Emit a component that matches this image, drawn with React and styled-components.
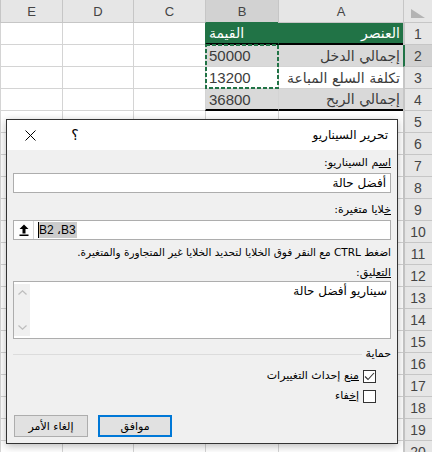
import React from 'react';
import styled, { createGlobalStyle } from 'styled-components';

const GlobalStyle = createGlobalStyle`
  html, body {
    margin: 0;
    padding: 0;
    background: #fff;
    overflow: hidden;
  }
`;

const Screen = styled.div`
  position: relative;
  width: 432px;
  height: 452px;
  overflow: hidden;
  font-family: "Liberation Sans", "DejaVu Sans", sans-serif;
`;

// sheet grid, right-to-left: row headers, A, B, C, D, E
const Sheet = styled.div`
  display: grid;
  direction: rtl;
  grid-template-columns: 29px 125px 73px 72px 71px 62px;
  grid-template-rows: 23px repeat(20, 22px);
`;

const Corner = styled.div`
  grid-row: 1;
  grid-column: 1;
  background: #e6e6e6;
  border-left: 1px solid #c6c6c6;
  border-bottom: 1px solid #c6c6c6;
  box-sizing: border-box;
  display: flex;
  align-items: flex-end;
  justify-content: center;
  padding-bottom: 4px;
`;

const ColHeader = styled.div`
  grid-row: 1;
  grid-column: ${({ $c }) => $c};
  background: ${({ $active }) => ($active ? '#d2d2d2' : '#e6e6e6')};
  border-left: 1px solid #c6c6c6;
  border-bottom: 1px solid ${({ $active }) => ($active ? '#217346' : '#c6c6c6')};
  box-sizing: border-box;
  display: flex;
  align-items: center;
  justify-content: center;
  font-size: 13px;
  color: #444;
`;

const RowHeader = styled.div`
  grid-column: 1;
  grid-row: ${({ $r }) => $r};
  background: ${({ $active }) => ($active ? '#d2d2d2' : '#e6e6e6')};
  border-left: 2px solid ${({ $active }) => ($active ? '#217346' : '#c6c6c6')};
  border-bottom: 1px solid #c6c6c6;
  box-sizing: border-box;
  display: flex;
  align-items: center;
  justify-content: center;
  font-size: 14px;
  color: #444;
  padding-right: 1px;
`;

const fills = { green: '#217346', gray: '#d9d9d9', none: '#fff' };

const Cell = styled.div`
  grid-row: ${({ $r }) => $r};
  grid-column: ${({ $c }) => $c};
  background: ${({ $fill }) => fills[$fill || 'none']};
  border-left: 1px solid ${({ $fill }) => ($fill === 'green' ? '#217346' : '#d4d4d4')};
  border-bottom: ${({ $thick }) => ($thick ? '2px solid #000' : '1px solid #d4d4d4')};
  box-sizing: border-box;
  display: flex;
  align-items: center;
  justify-content: ${({ $left }) => ($left ? 'flex-end' : 'flex-start')};
  padding: 0 3px;
  font-family: "DejaVu Sans", "Liberation Sans", sans-serif;
  font-size: 14px;
  color: ${({ $fill }) => ($fill === 'green' ? '#fff' : '#3c3c3c')};
  white-space: nowrap;
  overflow: hidden;
`;

const Number = styled.span`
  font-family: "Liberation Sans", sans-serif;
  font-size: 15px;
`;

const Marching = styled.div`
  grid-column: 3;
  grid-row: 3 / 5;
  margin: -1px -1px 0 0;
  pointer-events: none;
  z-index: 1;
`;

const Dialog = styled.div`
  position: absolute;
  left: 6px;
  top: 119px;
  width: 392px;
  height: 325px;
  box-sizing: border-box;
  border: 1px solid #333;
  background: #f0f0f0;
  box-shadow: 0 2px 8px rgba(0, 0, 0, 0.28);
  direction: rtl;
  display: flex;
  flex-direction: column;
  font-family: "DejaVu Sans", "Liberation Sans", sans-serif;
  font-size: 11px;
  color: #000;
`;

const TitleBar = styled.div`
  height: 30px;
  background: #fff;
  display: flex;
  align-items: center;
  padding-right: 9px;
`;

const Title = styled.div`
  font-size: 12px;
`;

const TitleButton = styled.div`
  width: ${({ $w }) => $w}px;
  height: 30px;
  display: flex;
  align-items: center;
  justify-content: center;
  margin-right: ${({ $push }) => ($push ? 'auto' : '0')};
  font-size: 14px;
`;

const Body = styled.div`
  flex: 1;
  display: flex;
  flex-direction: column;
  padding: 5px 6px 6px 6px;
`;

const Label = styled.div`
  line-height: 14px;
  margin-top: ${({ $mt }) => $mt || 0}px;
  white-space: nowrap;
`;

const TextBox = styled.div`
  height: 20px;
  box-sizing: border-box;
  margin-top: ${({ $mt }) => $mt || 0}px;
  background: #fff;
  border: 1px solid #adadad;
  display: flex;
  align-items: center;
  padding: 0 4px;
  font-size: 12px;
`;

const RefBox = styled.div`
  height: 20px;
  box-sizing: border-box;
  margin-top: 3px;
  background: #fff;
  border: 1px solid #adadad;
  display: flex;
  direction: ltr;
  align-items: center;
  font-family: "Liberation Sans", "DejaVu Sans", sans-serif;
  font-size: 12px;
`;

const PickButton = styled.div`
  width: 20px;
  height: 18px;
  box-sizing: border-box;
  border-right: 1px solid #d6d6d6;
  background: #fdfdfd;
  display: flex;
  align-items: center;
  justify-content: center;
`;

const Selected = styled.span`
  margin-left: 4px;
  border-left: 1px solid #000;
  background: #cccccc;
  padding: 1px 1px 1px 0;
  line-height: 14px;
`;

const Hint = styled.div`
  margin-top: 5px;
  line-height: 14px;
  font-size: 10.5px;
  white-space: nowrap;
`;

const MemoBox = styled.div`
  height: 58px;
  box-sizing: border-box;
  margin-top: 1px;
  background: #fff;
  border: 1px solid #adadad;
  display: flex;
  font-size: 12px;
`;

const MemoText = styled.div`
  flex: 1;
  padding: 2px 3px 0 0;
  line-height: 15px;
`;

const ScrollBar = styled.div`
  width: 16px;
  margin: 2px 2px 2px 0;
  background: #f0f0f0;
  display: flex;
  flex-direction: column;
  justify-content: space-between;
  align-items: center;
  padding: 6px 0;
  box-sizing: border-box;
`;

const Group = styled.div`
  margin-top: 8px;
  display: flex;
  align-items: center;
  gap: 4px;
  line-height: 14px;

  &::after {
    content: '';
    flex: 1;
    height: 1px;
    background: #dcdcdc;
    margin-top: 1px;
  }
`;

const CheckRow = styled.label`
  display: flex;
  align-items: center;
  gap: 4px;
  margin: ${({ $mt }) => $mt || 0}px 15px 0 0;
  line-height: 14px;
`;

const Box = styled.span`
  width: 13px;
  height: 13px;
  box-sizing: border-box;
  border: 1px solid #333;
  background: #fff;
  display: flex;
  align-items: center;
  justify-content: center;
`;

const Buttons = styled.div`
  margin-top: auto;
  display: flex;
  justify-content: flex-end;
  gap: 10px;
  padding-left: 1px;
`;

const Button = styled.div`
  width: 74px;
  height: 22px;
  box-sizing: border-box;
  background: #e1e1e1;
  border: ${({ $primary }) => ($primary ? '2px solid #0078d7' : '1px solid #adadad')};
  display: flex;
  align-items: center;
  justify-content: center;
  font-size: 11px;
`;

const columns = ['A', 'B', 'C', 'D', 'E'];

const rows = [
  { a: 'العنصر', b: 'القيمة', fill: 'green', thick: true },
  { a: 'إجمالي الدخل', b: '50000', fill: 'gray' },
  { a: 'تكلفة السلع المباعة', b: '13200' },
  { a: 'إجمالي الربح', b: '36800', fill: 'gray', thick: true },
];

const Chevron = ({ up }) => (
  <svg width="9" height="5" viewBox="0 0 9 5">
    <path d={up ? 'M0.5 4.5 L4.5 0.8 L8.5 4.5' : 'M0.5 0.5 L4.5 4.2 L8.5 0.5'} fill="none" stroke="#bdbdbd" strokeWidth="1.2" />
  </svg>
);

const App = () => {
  const sheetRows = [];
  for (let r = 1; r <= 20; r++) {
    const d = rows[r - 1];
    const gr = r + 1;
    sheetRows.push(
      <React.Fragment key={r}>
        <RowHeader $r={gr} $active={r === 2}>{r}</RowHeader>
        <Cell $r={gr} $c={2} $fill={d?.fill} $thick={d?.thick}>{d?.a}</Cell>
        <Cell $r={gr} $c={3} $fill={d?.fill} $thick={d?.thick} $left>
          {d && (r === 1 ? d.b : <Number>{d.b}</Number>)}
        </Cell>
        <Cell $r={gr} $c={4} />
        <Cell $r={gr} $c={5} />
        <Cell $r={gr} $c={6} />
      </React.Fragment>
    );
  }

  return (
    <Screen>
      <GlobalStyle />
      <Sheet>
        <Corner>
          <svg width="14" height="9" viewBox="0 0 14 9">
            <polygon points="0,0 0,9 14,9" fill="#b4b4b4" />
          </svg>
        </Corner>
        {columns.map((c, i) => (
          <ColHeader key={c} $c={i + 2} $active={c === 'B'}>{c}</ColHeader>
        ))}
        {sheetRows}
        <Marching>
          <svg width="74" height="45" viewBox="0 0 74 45">
            <rect x="1" y="1" width="72" height="43" fill="none" stroke="#217346" strokeWidth="2" strokeDasharray="4 2" />
          </svg>
        </Marching>
      </Sheet>

      <Dialog>
        <TitleBar>
          <Title>تحرير السيناريو</Title>
          <TitleButton $w={44} $push>؟</TitleButton>
          <TitleButton $w={46}>
            <svg width="11" height="11" viewBox="0 0 11 11">
              <path d="M0.5 0.5 L10.5 10.5 M10.5 0.5 L0.5 10.5" stroke="#000" strokeWidth="1" />
            </svg>
          </TitleButton>
        </TitleBar>

        <Body>
          <Label $mt={1}><u>اس</u>م السيناريو:</Label>
          <TextBox $mt={3}>أفضل حالة</TextBox>

          <Label $mt={10}><u>خ</u>لايا متغيرة:</Label>
          <RefBox>
            <PickButton>
              <svg width="10" height="12" viewBox="0 0 10 12">
                <path d="M5 0.5 L9.5 5 L6.5 5 L6.5 9.5 L3.5 9.5 L3.5 5 L0.5 5 Z" fill="#000" />
                <rect x="0.5" y="10.5" width="9" height="1.5" fill="#000" />
              </svg>
            </PickButton>
            <Selected>B2 ،B3</Selected>
          </RefBox>
          <Hint>اضغط CTRL مع النقر فوق الخلايا لتحديد الخلايا غير المتجاورة والمتغيرة.</Hint>

          <Label $mt={7}><u>التع</u>ليق:</Label>
          <MemoBox>
            <MemoText>سيناريو أفضل حالة</MemoText>
            <ScrollBar>
              <Chevron up />
              <Chevron />
            </ScrollBar>
          </MemoBox>

          <Group>حماية</Group>
          <CheckRow $mt={8}>
            <Box>
              <svg width="11" height="9" viewBox="0 0 11 9">
                <path d="M1 4.5 L4 7.5 L10 1" fill="none" stroke="#333" strokeWidth="1.1" />
              </svg>
            </Box>
            <span><u>منع</u> إحداث التغييرات</span>
          </CheckRow>
          <CheckRow $mt={6}>
            <Box />
            <span>إ<u>خ</u>فاء</span>
          </CheckRow>

          <Buttons>
            <Button $primary>موافق</Button>
            <Button>إلغاء الأمر</Button>
          </Buttons>
        </Body>
      </Dialog>
    </Screen>
  );
};

export default App;
